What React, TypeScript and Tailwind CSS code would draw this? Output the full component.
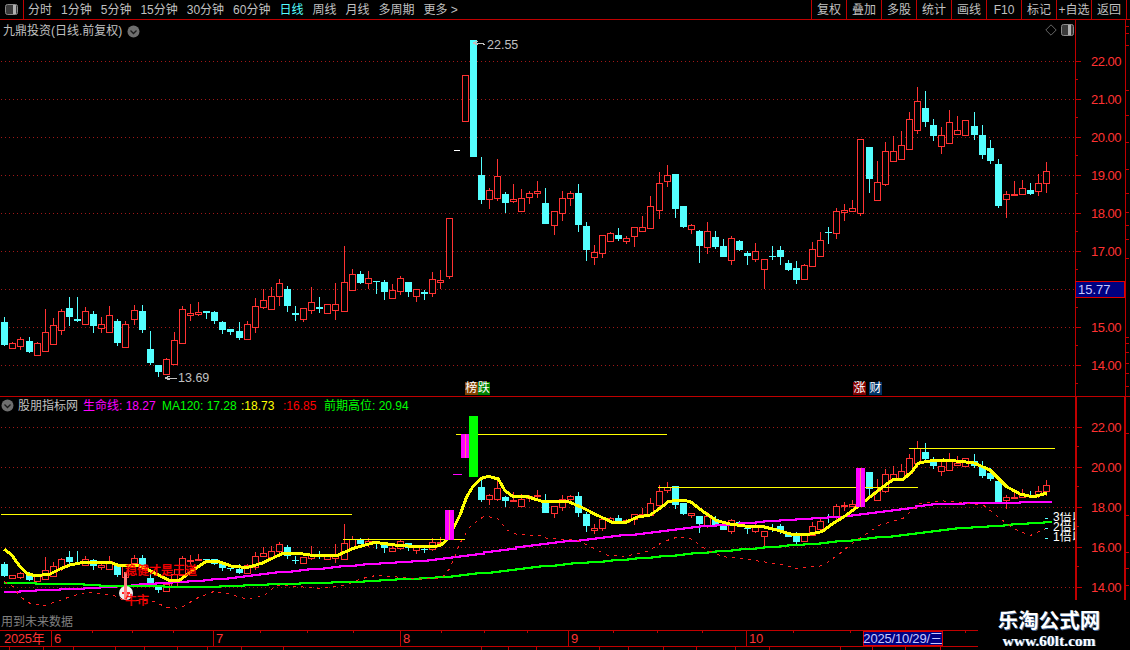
const RED = '#ff3232';
const CYAN = '#54ffff';

type Candle = { top: number; open: number; close: number; low: number; kind: string };

// raw numbers read from 3x crops: wick top, body top, body bottom, wick bottom
const makeGroup = (off: number, rows: (number | string)[][]): Candle[] =>
  rows.map((r) => ({
    top: (r[0] as number) / 3 + off,
    open: (r[1] as number) / 3 + off,
    close: (r[2] as number) / 3 + off,
    low: (r[3] as number) / 3 + off,
    kind: r[4] as string,
  }));

const candles: Candle[] = [
  ...makeGroup(200, [
    [352, 366, 435, 438, 'c'], [427, 430, 445, 447, 'r'], [410, 418, 439, 449, 'r'], [412, 424, 456, 460, 'c'],
    [427, 430, 464, 467, 'r'], [327, 397, 452, 452, 'r'], [354, 376, 431, 431, 'r'], [328, 334, 389, 405, 'r'],
    [292, 324, 351, 378, 'c'], [292, 357, 362, 366, 'c'], [322, 334, 371, 375, 'r'], [334, 342, 378, 399, 'c'],
    [352, 373, 383, 399, 'r'], [319, 346, 395, 395, 'r'], [357, 363, 429, 437, 'c'], [364, 373, 440, 443, 'r'],
    [316, 331, 358, 375, 'r'], [316, 333, 389, 399, 'c'], [394, 447, 488, 495, 'c'], [495, 495, 515, 530, 'c'],
    [475, 478, 521, 521, 'r'], [396, 421, 491, 491, 'r'], [319, 328, 428, 431, 'r'], [312, 340, 346, 363, 'r'],
    [306, 335, 341, 347, 'r'], [334, 334, 338, 357, 'c'], [334, 336, 362, 371, 'c'], [363, 367, 389, 402, 'c'],
    [387, 387, 395, 405, 'c'], [366, 393, 414, 420, 'c'], [364, 373, 418, 418, 'r'], [295, 319, 380, 399, 'r'],
    [267, 301, 320, 327, 'r'], [262, 289, 326, 326, 'r'], [238, 250, 289, 319, 'r'], [259, 267, 317, 336, 'c'],
    [319, 340, 346, 363, 'c'], [325, 325, 358, 366, 'r'], [262, 307, 331, 342, 'r'], [292, 322, 326, 339, 'c'],
    [313, 313, 338, 338, 'r'], [250, 313, 329, 360, 'r'], [138, 247, 334, 334, 'r'], [208, 223, 271, 271, 'r'],
    [214, 223, 248, 253, 'c'], [214, 235, 250, 268, 'r'], [244, 244, 247, 282, 'c'],
  ]),
  ...makeGroup(130, [
    [450, 456, 486, 510, 'c'], [462, 481, 503, 507, 'r'], [438, 445, 482, 495, 'r'], [456, 456, 486, 501, 'c'],
    [478, 478, 497, 516, 'r'], [480, 487, 491, 510, 'c'], [427, 448, 488, 501, 'r'], [420, 451, 457, 477, 'r'],
    [265, 265, 437, 447, 'r'], [60, 60, 63, 63, 'w'], [-165, -165, -28, -28, 'r'], [-270, -270, 81, 81, 'c'],
    [82, 135, 209, 222, 'c'], [175, 181, 206, 237, 'r'], [87, 139, 203, 213, 'r'], [187, 192, 218, 249, 'c'],
    [163, 208, 212, 219, 'r'], [178, 205, 242, 242, 'r'], [184, 190, 200, 222, 'r'], [153, 183, 188, 204, 'r'],
    [175, 219, 282, 282, 'c'], [244, 244, 284, 315, 'r'], [183, 205, 248, 273, 'r'], [184, 190, 203, 228, 'r'],
    [163, 189, 285, 306, 'c'], [277, 288, 360, 393, 'c'], [346, 367, 380, 405, 'r'], [316, 316, 368, 384, 'r'],
    [306, 310, 332, 332, 'r'], [294, 315, 327, 333, 'c'], [319, 325, 334, 342, 'r'], [292, 292, 317, 351, 'r'],
    [258, 292, 302, 306, 'r'], [198, 229, 293, 293, 'r'], [126, 160, 239, 267, 'r'], [105, 136, 152, 171, 'r'],
    [132, 132, 237, 264, 'c'], [228, 228, 291, 294, 'c'], [282, 286, 296, 312, 'r'], [300, 304, 348, 399, 'c'],
    [276, 304, 350, 372, 'r'], [303, 321, 351, 357, 'c'], [327, 348, 381, 381, 'c'], [319, 325, 389, 405, 'r'],
    [330, 333, 360, 363, 'c'], [363, 369, 377, 405, 'c'], [339, 364, 386, 396, 'r'],
  ]),
  ...makeGroup(80, [
    [537, 537, 566, 627, 'r'], [498, 527, 530, 540, 'c'], [498, 510, 530, 555, 'c'], [540, 549, 570, 573, 'c'],
    [544, 564, 600, 612, 'c'], [551, 555, 596, 596, 'r'], [487, 508, 558, 561, 'r'], [456, 481, 527, 531, 'r'],
    [441, 456, 459, 492, 'c'], [384, 394, 458, 477, 'r'], [372, 391, 395, 423, 'r'], [360, 385, 392, 396, 'r'],
    [178, 178, 398, 408, 'r'], [201, 201, 297, 339, 'c'], [243, 307, 359, 359, 'r'], [186, 214, 311, 318, 'r'],
    [168, 214, 242, 242, 'r'], [153, 196, 236, 240, 'r'], [97, 118, 206, 210, 'r'], [21, 64, 149, 162, 'r'],
    [33, 84, 126, 141, 'c'], [117, 135, 168, 183, 'c'], [141, 166, 197, 222, 'r'], [90, 127, 188, 188, 'r'],
    [108, 151, 161, 161, 'r'], [120, 121, 164, 164, 'r'], [96, 138, 165, 180, 'c'], [135, 165, 225, 237, 'c'],
    [180, 204, 243, 252, 'c'], [237, 252, 378, 384, 'c'], [333, 343, 358, 414, 'r'], [303, 342, 345, 345, 'r'],
    [300, 325, 341, 345, 'r'], [309, 330, 342, 345, 'c'], [282, 310, 332, 348, 'r'], [246, 274, 308, 339, 'r'],
  ]),
];

const centerX = (i: number) => Math.round(4.33 + i * 8.077);
// lower panel shares the price axis, only the scale differs
const toLower = (y: number) => 427 + ((y - 61.3) * 20) / 38;

const pts = (ox: number, oy: number, raw: number[][]) => raw.map(([x, y]) => [x / 3 + ox, y / 3 + oy]);

const yellowLine = [
  ...pts(0, 390, [[13, 478], [35, 495], [60, 530], [85, 553], [110, 557], [150, 552], [180, 537], [210, 525], [250, 517], [330, 517], [360, 528], [420, 527], [470, 553], [510, 572], [540, 570], [580, 540], [620, 513], [650, 513], [700, 530], [745, 532], [790, 518], [850, 489], [890, 489], [950, 498], [1010, 497], [1060, 475], [1125, 457], [1200, 467], [1275, 470]]),
  ...pts(430, 400, [[0, 440], [30, 437], [50, 420], [70, 385], [90, 345], [110, 290], [130, 258], [155, 235], [175, 229], [205, 237], [225, 272], [250, 290], [295, 291], [340, 305], [415, 305], [455, 322], [500, 345], [545, 366], [590, 366], [620, 352], [660, 345], [690, 325], [715, 305], [745, 300], [780, 304], [820, 335], [860, 362], [900, 372], [960, 380], [1000, 380], [1040, 390]]),
  ...pts(780, 420, [[0, 333], [40, 344], [80, 344], [125, 335], [160, 310], [200, 285], [230, 262], [290, 215], [340, 178], [370, 178], [395, 155], [415, 130], [440, 124], [490, 120], [520, 122], [580, 128], [630, 150], [680, 200], [720, 222], [760, 231], [800, 219]]),
];

const dashLine = [
  ...pts(0, 390, [[13, 575], [40, 590], [60, 620], [90, 640], [130, 647], [170, 635], [210, 620], [260, 607], [340, 615], [370, 630], [450, 630], [500, 652], [540, 655], [590, 625], [640, 605], [680, 610], [740, 627], [790, 618], [830, 585], [960, 595], [1040, 585], [1080, 567], [1130, 556], [1200, 562], [1275, 568]]),
  ...pts(430, 400, [[0, 535], [35, 535], [60, 505], [90, 430], [120, 380], [160, 350], [200, 352], [230, 390], [260, 403], [330, 407], [350, 415], [440, 420], [480, 440], [530, 465], [580, 470], [650, 455], [700, 425], [740, 412], [780, 415], [830, 450], [880, 470], [950, 478], [1020, 488], [1040, 493]]),
  ...pts(780, 420, [[0, 433], [50, 445], [130, 437], [180, 400], [230, 360], [300, 315], [370, 295], [420, 250], [480, 242], [550, 248], [610, 255], [660, 295], [700, 325], [750, 347], [800, 325]]),
];

const magentaLine = [[4, 592], [43, 590], [110, 587], [143, 584], [207, 580], [280, 572], [367, 564], [430, 560], [480, 553], [537, 544], [607, 537], [693, 527], [780, 520], [847, 516], [913, 507], [930, 504], [1047, 502]];
const greenLine = [[4, 583], [67, 584], [110, 586], [207, 587], [247, 585], [310, 583], [350, 582], [383, 580], [430, 578], [480, 573], [563, 564], [630, 559], [697, 553], [780, 546], [820, 543], [880, 537], [947, 529], [1047, 522]];

const polyStr = (p: number[][]) => p.map(([x, y]) => `${x.toFixed(1)},${y.toFixed(1)}`).join(' ');

// moving averages on this terminal move in blocks, one step per candle
function stepPath(p: number[][]) {
  let d = '';
  for (let x = p[0][0]; x <= p[p.length - 1][0]; x += 8) {
    let k = 0;
    while (k < p.length - 2 && p[k + 1][0] < x) k++;
    const t = (x - p[k][0]) / (p[k + 1][0] - p[k][0]);
    const y = Math.round(p[k][1] + (p[k + 1][1] - p[k][1]) * t);
    d += d ? `L${x} ${y}H${x + 8}` : `M${x} ${y}H${x + 8}`;
  }
  return d;
}

function Grid({ ys }: { ys: number[] }) {
  return (
    <g>
      {ys.map((y) => (
        <line key={y} x1="1" x2="1075" y1={y + 0.5} y2={y + 0.5} stroke="#a01818" strokeDasharray="1 3" />
      ))}
    </g>
  );
}

function CandleMark({ c, i, lower }: { c: Candle; i: number; lower?: boolean }) {
  const map = (v: number) => Math.round(lower ? toLower(v) : v);
  const cx = centerX(i);
  const top = map(c.top);
  const open = map(c.open);
  const close = map(c.close);
  const low = map(c.low);
  const h = Math.max(close - open, 1);

  if (lower && (i === 55 || i === 57 || i === 106)) {
    const w = i === 57 ? 8 : 9;
    return (
      <g>
        <rect x={cx - 4} y={open} width={w} height={h} fill="#ff00ff" />
        <rect x={cx} y={open} width="1" height={h} fill="#ff8080" />
      </g>
    );
  }
  if (lower && i === 56) return <rect x={cx - 4} y={open} width="9" height="1" fill="#ff00ff" />;
  if (lower && i === 58) return <rect x={cx - 4} y={open} width="9" height={h} fill="#00ff00" />;
  if (c.kind === 'w') return <rect x={cx - 3} y={open} width="6" height="1" fill="#ffffff" />;

  const color = c.kind === 'c' ? CYAN : RED;
  return (
    <g>
      <rect x={cx} y={top} width="1" height={Math.max(low - top, 1)} fill={color} />
      {c.kind === 'c' ? (
        <rect x={cx - 3} y={open} width="7" height={h} fill={color} />
      ) : (
        <rect x={cx - 2.5} y={open + 0.5} width="6" height={h} fill="#000000" stroke={color} />
      )}
    </g>
  );
}

function PriceRow({ label, tall, wide, box }: { label: string; tall: string; wide?: boolean; box?: string }) {
  return (
    <div className={`relative flex items-center ${tall}`}>
      <span className={`h-px w-[5px] bg-[#c00000] ${wide ? 'mr-[9px]' : 'mr-[10px]'}`} />
      <span className="text-[13px] leading-none tracking-[-0.5px] text-[#ff3232]">{label}</span>
      <span className="absolute bottom-0 left-0 h-px w-[2px] bg-[#c00000]" />
      {box && (
        <div className="absolute left-[-1px] right-0 top-[11px] flex h-[17px] items-center border border-[#e00000] bg-[#000080] pl-[2px] text-[13px] text-[#c8c8ff]">
          {box}
        </div>
      )}
    </div>
  );
}

function SideTicks({ ys, top }: { ys: number[]; top: number }) {
  return (
    <div className="relative w-[4px]">
      {ys.map((y) => (
        <span key={y} className="absolute left-0 h-px w-[3px] bg-[#c00000]" style={{ top: y - top }} />
      ))}
    </div>
  );
}

const menu = ['分时', '1分钟', '5分钟', '15分钟', '30分钟', '60分钟', '日线', '周线', '月线', '多周期', '更多 >'];
const buttons = ['复权', '叠加', '多股', '统计', '画线', 'F10', '标记', '+自选', '返回'];
const dateCells = [
  { t: '2025年', w: 'w-[51px] pl-[4px]' },
  { t: '6', w: 'w-[162px] pl-[2px] border-l' },
  { t: '7', w: 'w-[187px] pl-[2px] border-l' },
  { t: '8', w: 'w-[168px] pl-[2px] border-l' },
  { t: '9', w: 'w-[178px] pl-[2px] border-l' },
  { t: '10', w: 'w-[232px] pl-[2px] border-l' },
];
const dateTicks = [92, 132, 173, 260, 307, 353, 441, 484, 527, 613, 657, 702, 793, 850, 965];
const footTicks = [9, 43, 73, 115, 144, 177, 207, 241, 283, 481, 508, 536, 599, 628, 663, 696, 735, 769, 840, 872, 905, 940];

function ChevronDot({ className }: { className: string }) {
  return (
    <svg width="13" height="13" viewBox="0 0 13 13" className={className}>
      <circle cx="6.5" cy="6.5" r="6" fill="#6e6e6e" />
      <path d="M3.5 5.5 L6.5 8.5 L9.5 5.5" fill="none" stroke="#1a1a1a" strokeWidth="1.3" />
    </svg>
  );
}

export default function App() {
  const upperYs = [61, 99, 137, 175, 213, 251, 289, 327, 365];
  const lowerYs = [427, 467, 507, 547, 587];

  return (
    <div className="relative flex h-[650px] w-[1130px] flex-col overflow-hidden bg-black font-['Liberation_Sans','Noto_Sans_CJK_SC',sans-serif] text-[12px] text-[#c0c0c0]">
      {/* 顶部工具条 */}
      <div className="flex h-[20px] shrink-0 items-center border-b border-[#c00000]">
        <div className="flex h-full w-[24px] items-center justify-center border-r border-[#c00000]">
          <svg width="13" height="11" viewBox="0 0 13 11">
            <rect x="0.5" y="0.5" width="12" height="10" rx="2" fill="#3a3a3a" stroke="#8a8a8a" />
            <rect x="8" y="1" width="3" height="9" fill="#b0b0b0" />
          </svg>
        </div>
        <div className="ml-[4px] flex gap-[9px]">
          {menu.map((m) => (
            <span key={m} className={m === '日线' ? 'text-[#54ffff]' : ''}>
              {m}
            </span>
          ))}
        </div>
        <div className="ml-auto mr-[3px] flex h-full border-r border-[#c00000]">
          {buttons.map((b) => (
            <span key={b} className="flex w-[35px] items-center justify-center border-l border-[#c00000] whitespace-nowrap">
              {b}
            </span>
          ))}
        </div>
      </div>

      {/* 主图 */}
      <div className="flex h-[377px] shrink-0 border-b border-[#c00000]">
        <div className="relative w-[1075px]">
          <svg width="1075" height="376" viewBox="0 20 1075 376" shapeRendering="crispEdges" className="block">
            <Grid ys={upperYs} />
            {candles.map((c, i) => (
              <CandleMark key={i} c={c} i={i} />
            ))}
            <path d="M473 43 L478 41 M473 43 L478 45 M473 43 H482 L485 45" fill="none" stroke="#c0c0c0" />
            <path d="M165 378 L170 376 M165 378 L170 380 M165 378 H177" fill="none" stroke="#c0c0c0" />
          </svg>

          <div className="absolute left-[3px] top-[2px] flex items-center gap-[5px]">
            <span>九鼎投资(日线.前复权)</span>
            <ChevronDot className="block" />
          </div>
          <div className="absolute right-[1px] top-[4px] flex items-center gap-[4px]">
            <svg width="12" height="12" viewBox="0 0 12 12">
              <path d="M6 0.8 L11.2 6 L6 11.2 L0.8 6 Z" fill="none" stroke="#666666" />
            </svg>
            <svg width="13" height="12" viewBox="0 0 13 12">
              <rect x="0.5" y="0.5" width="12" height="11" rx="2" fill="#3a3a3a" stroke="#8a8a8a" />
              <rect x="7" y="1" width="3" height="10" fill="#b0b0b0" />
            </svg>
          </div>

          <span className="absolute left-[487px] top-[19px] text-[12.5px] leading-none">22.55</span>
          <span className="absolute left-[178px] top-[352px] text-[12.5px] leading-none">13.69</span>

          <div className="absolute left-[465px] top-[362px] flex h-[13px] leading-[13px] text-white">
            <span className="w-[12.5px] bg-[#804000] text-center">榜</span>
            <span className="w-[12.5px] bg-[#008000] text-center">跌</span>
          </div>
          <div className="absolute left-[853px] top-[362px] flex h-[13px] gap-[3px] leading-[13px] text-white">
            <span className="w-[13px] bg-[#800000] text-center">涨</span>
            <span className="w-[13px] bg-[#003366] text-center">财</span>
          </div>
        </div>

        <div className="w-[52px] border-x border-[#c00000] pt-[22px]">
          {[22, 21, 20, 19, 18, 17, 16, 15, 14].map((p) =>
            p === 16 ? (
              <PriceRow key={p} label="" tall="h-[38px]" box="15.77" />
            ) : (
              <PriceRow key={p} label={`${p}.00`} tall="h-[38px]" />
            )
          )}
        </div>
        <SideTicks top={20} ys={[26, 33, 45, 90, 115, 142, 169, 193, 212, 225, 239, 258, 337, 343, 352, 363, 373, 386]} />
      </div>

      {/* 副图 */}
      <div className="flex h-[233px] shrink-0">
        <div className="relative w-[1075px]">
          <svg width="1075" height="233" viewBox="0 397 1075 233" shapeRendering="crispEdges" className="block">
            <Grid ys={lowerYs} />
            {candles.map((c, i) => (
              <CandleMark key={i} c={c} i={i} lower />
            ))}
            <path d={stepPath(magentaLine)} fill="none" stroke="#ff00ff" strokeWidth="2.5" />
            <path d={stepPath(greenLine)} fill="none" stroke="#00ff00" strokeWidth="2.5" />
            <polyline points={polyStr(dashLine)} fill="none" stroke="#ff2020" strokeDasharray="3 5" />
            <polyline points={polyStr(yellowLine)} fill="none" stroke="#ffff00" strokeWidth="3" />
            <g fill="#ffff00">
              <rect x="1" y="514" width="351" height="1" />
              <rect x="343" y="539" width="122" height="1" />
              <rect x="456" y="434" width="211" height="1" />
              <rect x="658" y="487" width="260" height="1" />
              <rect x="909" y="448" width="146" height="1" />
            </g>
            {[55, 56, 57, 58, 106].map((i) => (
              <CandleMark key={i} c={candles[i]} i={i} lower />
            ))}
            <g fill="#54ffff">
              <rect x="1045" y="518" width="3" height="1" />
              <rect x="1045" y="528" width="3" height="1" />
              <rect x="1045" y="538" width="3" height="1" />
            </g>
            <circle cx="126" cy="593" r="7" fill="#f0f0f0" shapeRendering="auto" />
            <path d="M122 593 H130 M126 589 V597" stroke="#ff2020" strokeWidth="2" />
            <rect x="124" y="572" width="3" height="28" fill="#ff8080" />
          </svg>

          <div className="absolute inset-x-0 top-0 flex h-[17px] items-center whitespace-nowrap pl-[1px]">
            <ChevronDot className="mr-[4px] block" />
            <span className="w-[65px]">股朋指标网</span>
            <span className="w-[79px] text-[#ff00ff]">生命线: 18.27</span>
            <span className="w-[79px] text-[#00ff00]">MA120: 17.28</span>
            <span className="w-[42px] text-[#ffff00]">:18.73</span>
            <span className="w-[41px] text-[#ff0000]">:16.85</span>
            <span className="text-[#00ff00]">前期高位: 20.94</span>
          </div>

          <span className="absolute left-[125px] top-[168px] leading-none text-[#ff0000] [-webkit-text-stroke:0.3px_#ff0000]">稳健才是王道</span>
          <span className="absolute left-[125px] top-[198px] leading-none text-[#ff0000] [-webkit-text-stroke:0.3px_#ff0000]">牛市</span>
          <span className="absolute left-[1px] top-[219px] leading-none text-[#808080]">用到未来数据</span>

          <div className="absolute left-[1053px] top-[115px] h-[30px] w-[22px] overflow-hidden text-white">
            <div className="h-[10px] whitespace-nowrap leading-[10px]">3倍以上</div>
            <div className="h-[10px] whitespace-nowrap leading-[10px]">2倍以上</div>
            <div className="h-[10px] whitespace-nowrap leading-[10px]">1倍以上</div>
          </div>
        </div>

        <div className="w-[53px] border-x-2 border-[#c00000] pt-[10px]">
          {[22, 20, 18, 16, 14].map((p) => (
            <PriceRow key={p} label={`${p}.00`} tall="h-[40px]" wide />
          ))}
        </div>
        <SideTicks top={397} ys={[433, 515, 552, 568, 585]} />
      </div>

      {/* 日期条 */}
      <div className="relative flex h-[17px] shrink-0 items-center border-y border-[#c00000] text-[#ff3232]">
        {dateCells.map((d) => (
          <span key={d.t} className={`h-full border-[#c00000] text-[13px] leading-[15px] tracking-[-0.3px] ${d.w}`}>
            {d.t}
          </span>
        ))}
        {dateTicks.map((x) => (
          <span key={x} className="absolute top-0 h-[2px] w-px bg-[#c00000]" style={{ left: x }} />
        ))}
        <div className="absolute left-[863px] top-0 flex h-[15px] w-[80px] items-center justify-center whitespace-nowrap border border-[#e00000] bg-[#000080] text-[13px] tracking-[-0.2px] text-[#c8c8ff]">
          2025/10/29/三
        </div>
      </div>
      <div className="relative flex-1">
        {footTicks.map((x) => (
          <span key={x} className="absolute top-0 h-full w-px bg-[#c00000]" style={{ left: x }} />
        ))}
      </div>

      {/* 水印 */}
      <div className="absolute bottom-0 right-0 flex h-[50px] w-[152px] flex-col items-center bg-black pt-[9px] pr-[10px]">
        <span className="text-[20.5px] font-bold leading-[24px] text-white [text-shadow:1px_1px_0_#3f5f90]">乐淘公式网</span>
        <span className="font-['Liberation_Serif',serif] text-[15.5px] font-bold leading-[16px] text-white [text-shadow:1px_0_0_#3f6fa0]">
          www.60lt.com
        </span>
      </div>
    </div>
  );
}
